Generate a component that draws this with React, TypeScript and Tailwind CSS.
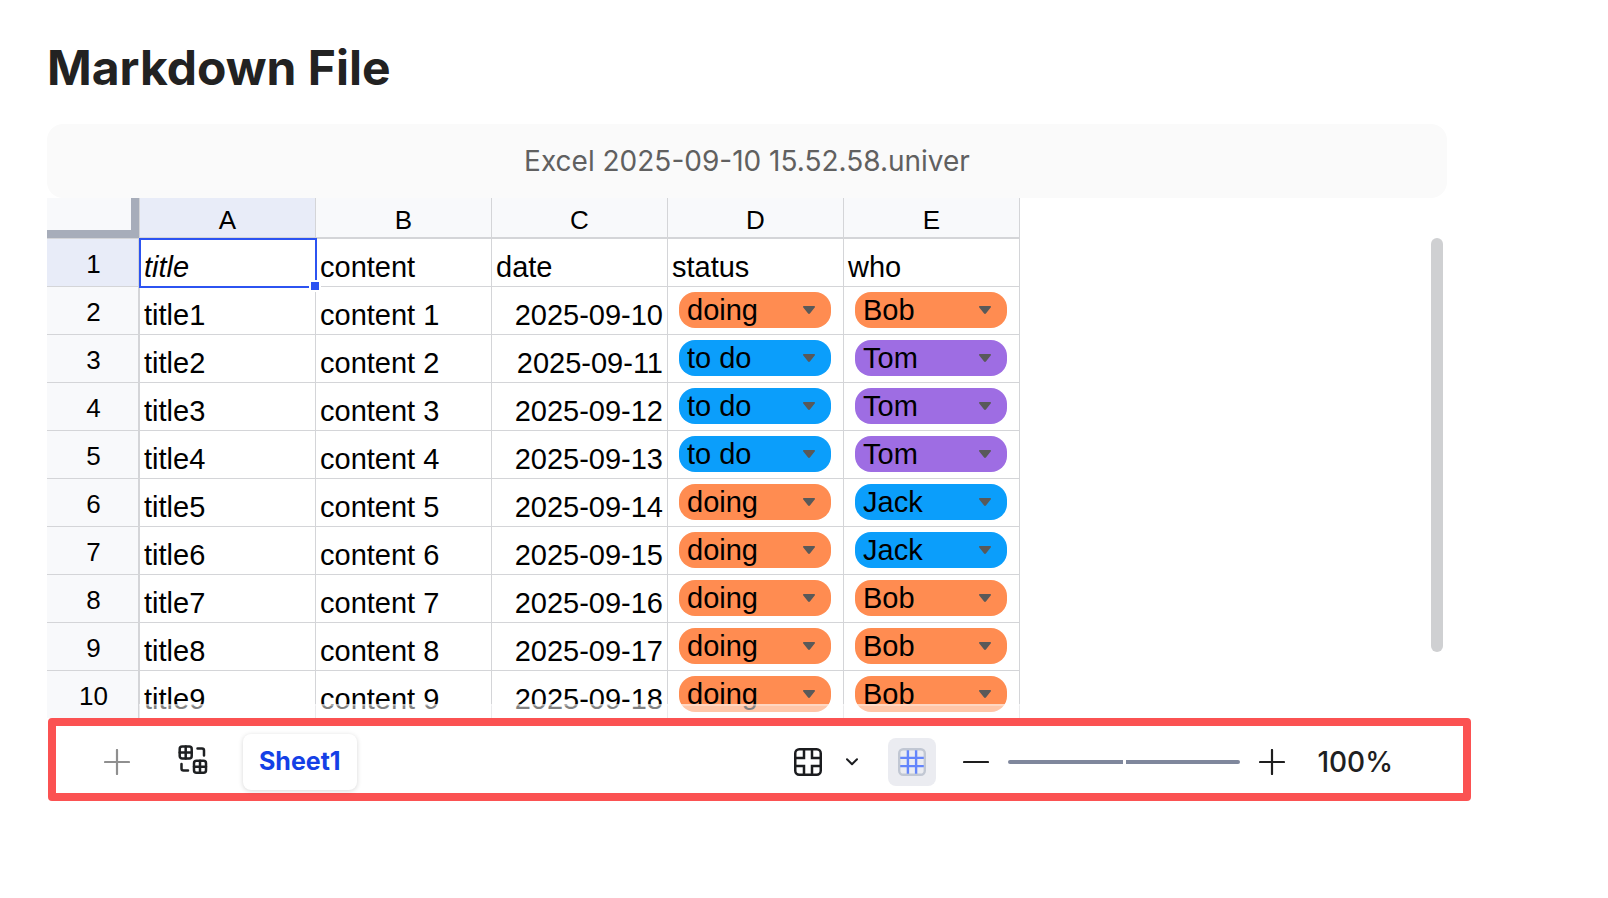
import { useState } from 'react';

type Option = { label: string; className: string };

const statusOptions: Option[] = [
  { label: 'to do', className: 'bg-[#0b9efb]' },
  { label: 'doing', className: 'bg-[#ff8c51]' },
];

const whoOptions: Option[] = [
  { label: 'Bob', className: 'bg-[#ff8c51]' },
  { label: 'Tom', className: 'bg-[#9e6de3]' },
  { label: 'Jack', className: 'bg-[#0b9efb]' },
];

const columns = ['A', 'B', 'C', 'D', 'E'];

const rows = [
  { title: 'title1', content: 'content 1', date: '2025-09-10', status: 'doing', who: 'Bob' },
  { title: 'title2', content: 'content 2', date: '2025-09-11', status: 'to do', who: 'Tom' },
  { title: 'title3', content: 'content 3', date: '2025-09-12', status: 'to do', who: 'Tom' },
  { title: 'title4', content: 'content 4', date: '2025-09-13', status: 'to do', who: 'Tom' },
  { title: 'title5', content: 'content 5', date: '2025-09-14', status: 'doing', who: 'Jack' },
  { title: 'title6', content: 'content 6', date: '2025-09-15', status: 'doing', who: 'Jack' },
  { title: 'title7', content: 'content 7', date: '2025-09-16', status: 'doing', who: 'Bob' },
  { title: 'title8', content: 'content 8', date: '2025-09-17', status: 'doing', who: 'Bob' },
  { title: 'title9', content: 'content 9', date: '2025-09-18', status: 'doing', who: 'Bob' },
];

const cell = 'h-12 border-r border-b border-[#d4d5d8] px-1 pb-[3px] align-bottom';
const rowHead = 'h-12 border-r-2 border-b border-[#d4d5d8] pt-0.5 pl-0.5 text-center align-middle text-[26px] font-normal';

interface ChipSelectProps {
  label: string;
  options: Option[];
  initial: string;
}

const ChipSelect = ({ label, options, initial }: ChipSelectProps) => {
  const [value, setValue] = useState(initial);
  const current = options.find((o) => o.label === value);

  return (
    <div className="relative w-[152px]">
      <select
        aria-label={label}
        value={value}
        onChange={(e) => setValue(e.target.value)}
        className={`block h-9 w-full appearance-none rounded-2xl pl-2 text-black outline-none ${current?.className}`}
      >
        {options.map((o) => (
          <option key={o.label}>{o.label}</option>
        ))}
      </select>
      <svg className="pointer-events-none absolute top-3.5 right-4 h-2 w-3" viewBox="0 0 12 8" fill="#595959">
        <path d="M1 0h10c.9 0 1.3 1 .7 1.600L6.900 7.500c-.5.600-1.300.600-1.800 0L.3 1.600C-.3 1 .1 0 1 0z" />
      </svg>
    </div>
  );
};

const SheetsIcon = () => (
  <svg width="30" height="30" viewBox="0 0 30 30" fill="none" stroke="#1e2022" strokeWidth="2.500" strokeLinecap="round" strokeLinejoin="round">
    <rect x="1.700" y="1.500" width="12" height="12" rx="2.500" />
    <path d="M7.700 1.500v12M1.700 7.500h12" />
    <rect x="16" y="15.800" width="12" height="12" rx="2.500" />
    <path d="M22 15.800v12M16 21.800h12" />
    <path d="M19.500 3.500H24a2 2 0 0 1 2 2V10.500" />
    <path d="M3.500 19v4.500a2 2 0 0 0 2 2H10" />
  </svg>
);

const FreezeIcon = () => (
  <svg width="28" height="28" viewBox="0 0 28 28" fill="none" stroke="#1b1c1f" strokeWidth="2.500">
    <rect x="1.250" y="1.250" width="25.500" height="25.500" rx="4" />
    <path d="M1 10h9V1M18 1v9h9M1 18h9v9M18 27v-9h9" />
  </svg>
);

const GridIcon = () => (
  <svg width="28" height="28" viewBox="0 0 28 28" fill="none" strokeWidth="2.400">
    <rect x="1.200" y="1.200" width="25.600" height="25.600" rx="4" stroke="#c1c7d3" />
    <path d="M9.900 2.200v23.600M18.100 2.200v23.600M2.200 9.900h23.600M2.200 18.100h23.600" stroke="#6485fb" />
  </svg>
);

const PlusIcon = ({ color }: { color: string }) => (
  <svg width="26" height="26" viewBox="0 0 26 26" stroke={color} strokeWidth="2.200" strokeLinecap="round">
    <path d="M1 13h24M13 1v24" />
  </svg>
);

const Sheet = () => (
  <div className="relative flex h-[520px] items-start justify-between overflow-hidden">
    <table className="w-[973px] table-fixed border-separate border-spacing-0 font-['Liberation_Sans',Arial,sans-serif] text-[29px] leading-8 text-black">
      <colgroup>
        <col className="w-[93px]" />
        {columns.map((c) => (
          <col key={c} className="w-44" />
        ))}
      </colgroup>
      <thead>
        <tr className="text-[26px]">
          <td className="h-[41px] border-r border-b border-[#d4d5d8] bg-[#f8f9fb] p-0">
            <div className="h-10 border-r-8 border-b-8 border-[#a7adba]" />
          </td>
          {columns.map((c) => (
            <th
              key={c}
              scope="col"
              className={`h-[41px] border-r border-b-2 border-[#d4d5d8] p-0 pt-1 font-normal ${c === 'A' ? 'bg-[#e8ecf8]' : 'bg-[#f8f9fb]'}`}
            >
              {c}
            </th>
          ))}
        </tr>
      </thead>
      <tbody>
        <tr>
          <th scope="row" className={`${rowHead} bg-[#e8ecf8]`}>1</th>
          <td className={`${cell} relative italic`}>
            title
            <span className="pointer-events-none absolute -inset-px -right-0.5 -bottom-0.5 border-2 border-[#2c53f1]" />
            <span className="absolute -right-1.5 -bottom-1.5 z-10 size-3 border-2 border-white bg-[#2c53f1]" />
          </td>
          <td className={cell}>content</td>
          <td className={cell}>date</td>
          <td className={cell}>status</td>
          <td className={cell}>who</td>
        </tr>
        {rows.map((row, i) => (
          <tr key={row.title}>
            <th scope="row" className={`${rowHead} bg-[#f8f9fb]`}>{i + 2}</th>
            <td className={cell}>{row.title}</td>
            <td className={cell}>{row.content}</td>
            <td className={`${cell} text-right`}>{row.date}</td>
            <td className="h-12 border-r border-b border-[#d4d5d8] py-0 pt-[5px] pl-[11px] align-top">
              <ChipSelect label={`status ${row.title}`} options={statusOptions} initial={row.status} />
            </td>
            <td className="h-12 border-r border-b border-[#d4d5d8] py-0 pt-[5px] pl-[11px] align-top">
              <ChipSelect label={`who ${row.title}`} options={whoOptions} initial={row.who} />
            </td>
          </tr>
        ))}
      </tbody>
    </table>

    {/* Vertical scrollbar */}
    <div className="mt-10 mr-1 h-[414px] w-3 rounded-full bg-[#cfd0d2]" />

    {/* Horizontal scrollbar track */}
    <div className="pointer-events-none absolute right-0 bottom-0 left-[92px] h-3.5 border-t-2 border-white/30 bg-white/50" />
  </div>
);

const Footer = () => {
  const [zoom, setZoom] = useState(100);

  return (
    <footer className="-mr-6 ml-px flex items-center justify-between rounded-sm border-8 border-[#fb5252] bg-white pt-2 pr-[70px] pb-[3px] pl-12 font-[Inter,sans-serif]">
      <div className="flex items-center">
        <button aria-label="Add sheet">
          <PlusIcon color="#8f8f8f" />
        </button>
        <button aria-label="All sheets" className="-mt-1 ml-12">
          <SheetsIcon />
        </button>
        <button className="ml-[35px] h-14 rounded-lg bg-white px-4 text-[25px] font-bold text-[#1440e6] shadow-[0_1px_5px_rgba(0,0,0,0.16)]">
          Sheet1
        </button>
      </div>

      <div className="flex items-center">
        <button aria-label="Freeze">
          <FreezeIcon />
        </button>
        <button aria-label="Freeze options" className="ml-6">
          <svg width="12" height="8" viewBox="0 0 12 8" fill="none" stroke="#1b1c1f" strokeWidth="2" strokeLinecap="round" strokeLinejoin="round">
            <path d="M1 1.200l5 5 5-5" />
          </svg>
        </button>
        <button aria-label="Gridlines" className="ml-[30px] flex size-12 items-center justify-center rounded-lg bg-[#ebecf1]">
          <GridIcon />
        </button>
        <button aria-label="Zoom out" className="ml-[27px]" onClick={() => setZoom(Math.max(10, zoom - 10))}>
          <svg width="26" height="26" viewBox="0 0 26 26" stroke="#1e1e1e" strokeWidth="2.200" strokeLinecap="round">
            <path d="M1 13h24" />
          </svg>
        </button>
        <input
          type="range"
          aria-label="Zoom"
          min={0}
          max={200}
          value={zoom}
          onChange={(e) => setZoom(Number(e.target.value))}
          className="mx-[19px] h-1 w-[232px] appearance-none rounded-full bg-[#7f879c] [&::-webkit-slider-thumb]:h-1 [&::-webkit-slider-thumb]:w-[3px] [&::-webkit-slider-thumb]:appearance-none [&::-webkit-slider-thumb]:bg-white"
        />
        <button aria-label="Zoom in" onClick={() => setZoom(Math.min(200, zoom + 10))}>
          <PlusIcon color="#1e1e1e" />
        </button>
        <span className="ml-8 text-[28px] leading-8 font-medium text-[#1e2022]">{zoom}%</span>
      </div>
    </footer>
  );
};

export default function App() {
  return (
    <main className="min-h-screen bg-white pt-9 pr-[161px] pl-[47px]">
      <h1 className="font-[Inter,sans-serif] text-5xl leading-16 font-bold text-[#222222]">Markdown File</h1>
      <div className="mt-6 rounded-2xl bg-[#fafafa] py-[19px] text-center font-[Inter,sans-serif] text-[28px] leading-9 text-[#606060]">
        Excel 2025-09-10 15.52.58.univer
      </div>
      <Sheet />
      <Footer />
    </main>
  );
}
